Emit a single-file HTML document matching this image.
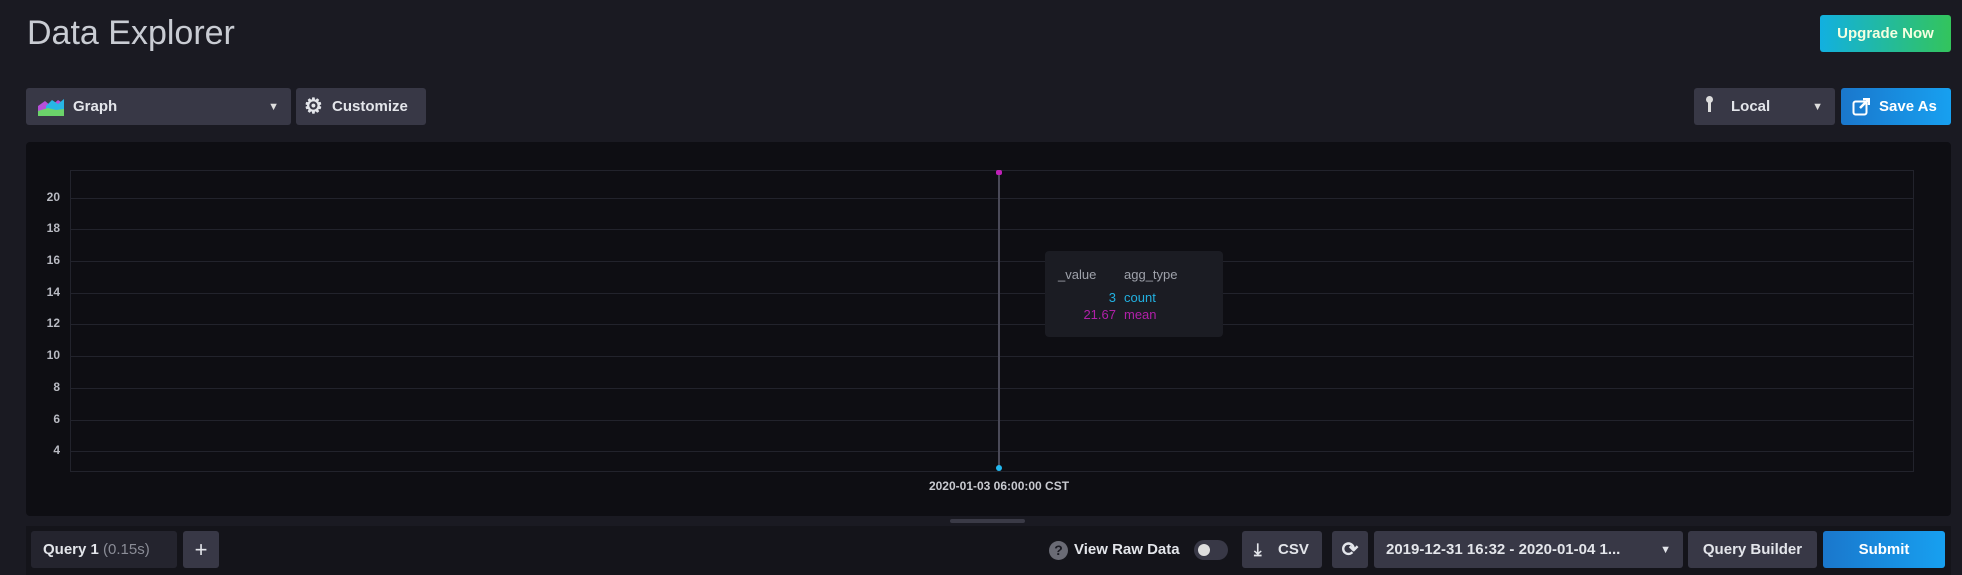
<!DOCTYPE html><html><head><style>
*{margin:0;padding:0;box-sizing:border-box}
body{width:1962px;height:575px;background:#1a1a22;font-family:"Liberation Sans",sans-serif;position:relative;overflow:hidden;color:#c6cad3}
.a{position:absolute}
.btn{position:absolute;background:#383846;border-radius:3px;color:#e3e5ea;font-size:15px;font-weight:bold;display:flex;align-items:center}
.g{position:absolute;left:70px;width:1844px;height:1px;background:#22232c}
.y{position:absolute;width:40px;left:20px;text-align:right;font-size:12px;font-weight:bold;color:#b8bac2}
</style></head><body>
<div class="a" style="left:27px;top:14px;font-size:34px;color:#c9ccd3">Data Explorer</div>
<div class="btn" style="left:1820px;top:15px;width:131px;height:37px;justify-content:center;background:linear-gradient(90deg,#12b0e0,#33c45c);color:#f4ffe0">Upgrade Now</div>
<div class="btn" style="left:26px;top:88px;width:265px;height:37px">
<svg class="a" style="left:12px;top:10px" width="26" height="18"><path d="M0 18 L0 8 L7 3 L13 8 L20 2 L26 6 L26 18Z" fill="#b74fd8"/><path d="M8 8 L14 2 L20 6 L26 1 L26 12 L8 12Z" fill="#27b6e6"/><path d="M0 13 L10 10 L18 12 L26 11 L26 18 L0 18Z" fill="#6bd36a"/></svg>
<span class="a" style="left:47px">Graph</span><span class="a" style="right:12px;font-size:11px;color:#ddd">▼</span></div>
<div class="btn" style="left:296px;top:88px;width:130px;height:37px"><span class="a" style="left:8px;font-size:21px;color:#e3e5ea">⚙</span><span class="a" style="left:36px">Customize</span></div>
<div class="btn" style="left:1694px;top:88px;width:141px;height:37px"><span class="a" style="left:14px;top:10px;width:3px;height:14px;background:#ddd"></span><span class="a" style="left:12px;top:8px;width:7px;height:7px;border-radius:50%;background:#ddd"></span><span class="a" style="left:37px">Local</span><span class="a" style="right:12px;font-size:11px;color:#ddd">▼</span></div>
<div class="btn" style="left:1841px;top:88px;width:110px;height:37px;background:linear-gradient(90deg,#1a77cc,#17a0f0);color:#fff"><svg class="a" style="left:11px;top:10px" width="18" height="18"><rect x="1.5" y="3.5" width="13" height="13" rx="2" fill="none" stroke="#fff" stroke-width="2"/><path d="M8 10 L16 2 M11 1 H17 V7" stroke="#fff" stroke-width="2.5" fill="none"/></svg><span class="a" style="left:38px">Save As</span></div>
<div class="a" style="left:26px;top:142px;width:1925px;height:374px;background:#0e0e13;border-radius:4px"></div>
<div class="a" style="left:70px;top:170px;width:1844px;height:302px;border:1px solid #22232c"></div>
<div class="g" style="top:198px"></div><div class="g" style="top:229px"></div><div class="g" style="top:261px"></div><div class="g" style="top:293px"></div><div class="g" style="top:324px"></div><div class="g" style="top:356px"></div><div class="g" style="top:388px"></div><div class="g" style="top:420px"></div><div class="g" style="top:451px"></div>
<div class="y" style="top:190px">20</div><div class="y" style="top:221px">18</div><div class="y" style="top:253px">16</div><div class="y" style="top:285px">14</div><div class="y" style="top:316px">12</div><div class="y" style="top:348px">10</div><div class="y" style="top:380px">8</div><div class="y" style="top:412px">6</div><div class="y" style="top:443px">4</div>
<div class="a" style="left:998px;top:172px;width:2px;height:296px;background:#4a4a58"></div>
<div class="a" style="left:996px;top:170px;width:6px;height:5px;background:#c020b8;border-radius:2px"></div>
<div class="a" style="left:996px;top:465px;width:6px;height:6px;background:#22b8f0;border-radius:50%"></div>
<div class="a" style="left:899px;top:479px;width:200px;text-align:center;font-size:12px;font-weight:bold;color:#c8cad0">2020-01-03 06:00:00 CST</div>
<div class="a" style="left:1045px;top:251px;width:178px;height:86px;background:#1b1c23;border-radius:4px;font-size:13px">
<span class="a" style="left:13px;top:16px;color:#9fa2ab">_value</span><span class="a" style="left:79px;top:16px;color:#9fa2ab">agg_type</span>
<span class="a" style="right:107px;top:39px;color:#22b0e0">3</span><span class="a" style="left:79px;top:39px;color:#22b0e0">count</span>
<span class="a" style="right:107px;top:56px;color:#b020a8">21.67</span><span class="a" style="left:79px;top:56px;color:#b020a8">mean</span></div>
<div class="a" style="left:950px;top:519px;width:75px;height:4px;border-radius:2px;background:#3a3a46"></div>
<div class="a" style="left:26px;top:526px;width:1925px;height:49px;background:#14141a"></div>
<div class="btn" style="left:31px;top:531px;width:146px;height:37px;background:#24242e"><span class="a" style="left:12px">Query 1 <span style="color:#8a8c96;font-weight:normal">(0.15s)</span></span></div>
<div class="btn" style="left:183px;top:531px;width:36px;height:37px;justify-content:center;font-size:22px;font-weight:normal">+</div>
<div class="a" style="left:1049px;top:541px;width:19px;height:19px;border-radius:50%;background:#6a6b75;color:#1a1a22;font-size:14px;font-weight:bold;text-align:center;line-height:19px">?</div>
<div class="a" style="left:1074px;top:541px;font-size:15px;font-weight:bold;color:#e3e5ea">View Raw Data</div>
<div class="a" style="left:1194px;top:540px;width:34px;height:20px;border-radius:10px;background:#383846"><div class="a" style="left:4px;top:4px;width:12px;height:12px;border-radius:50%;background:#ddd"></div></div>
<div class="btn" style="left:1242px;top:531px;width:80px;height:37px"><span class="a" style="left:12px;font-size:17px">⤓</span><span class="a" style="left:36px">CSV</span></div>
<div class="btn" style="left:1332px;top:531px;width:36px;height:37px;justify-content:center;font-size:20px">⟳</div>
<div class="btn" style="left:1374px;top:531px;width:309px;height:37px"><span class="a" style="left:12px">2019-12-31 16:32 - 2020-01-04 1...</span><span class="a" style="right:12px;font-size:11px">▼</span></div>
<div class="btn" style="left:1688px;top:531px;width:129px;height:37px;justify-content:center">Query Builder</div>
<div class="btn" style="left:1823px;top:531px;width:122px;height:37px;justify-content:center;background:linear-gradient(90deg,#1a77cc,#17a0f0);color:#fff">Submit</div>
</body></html>
